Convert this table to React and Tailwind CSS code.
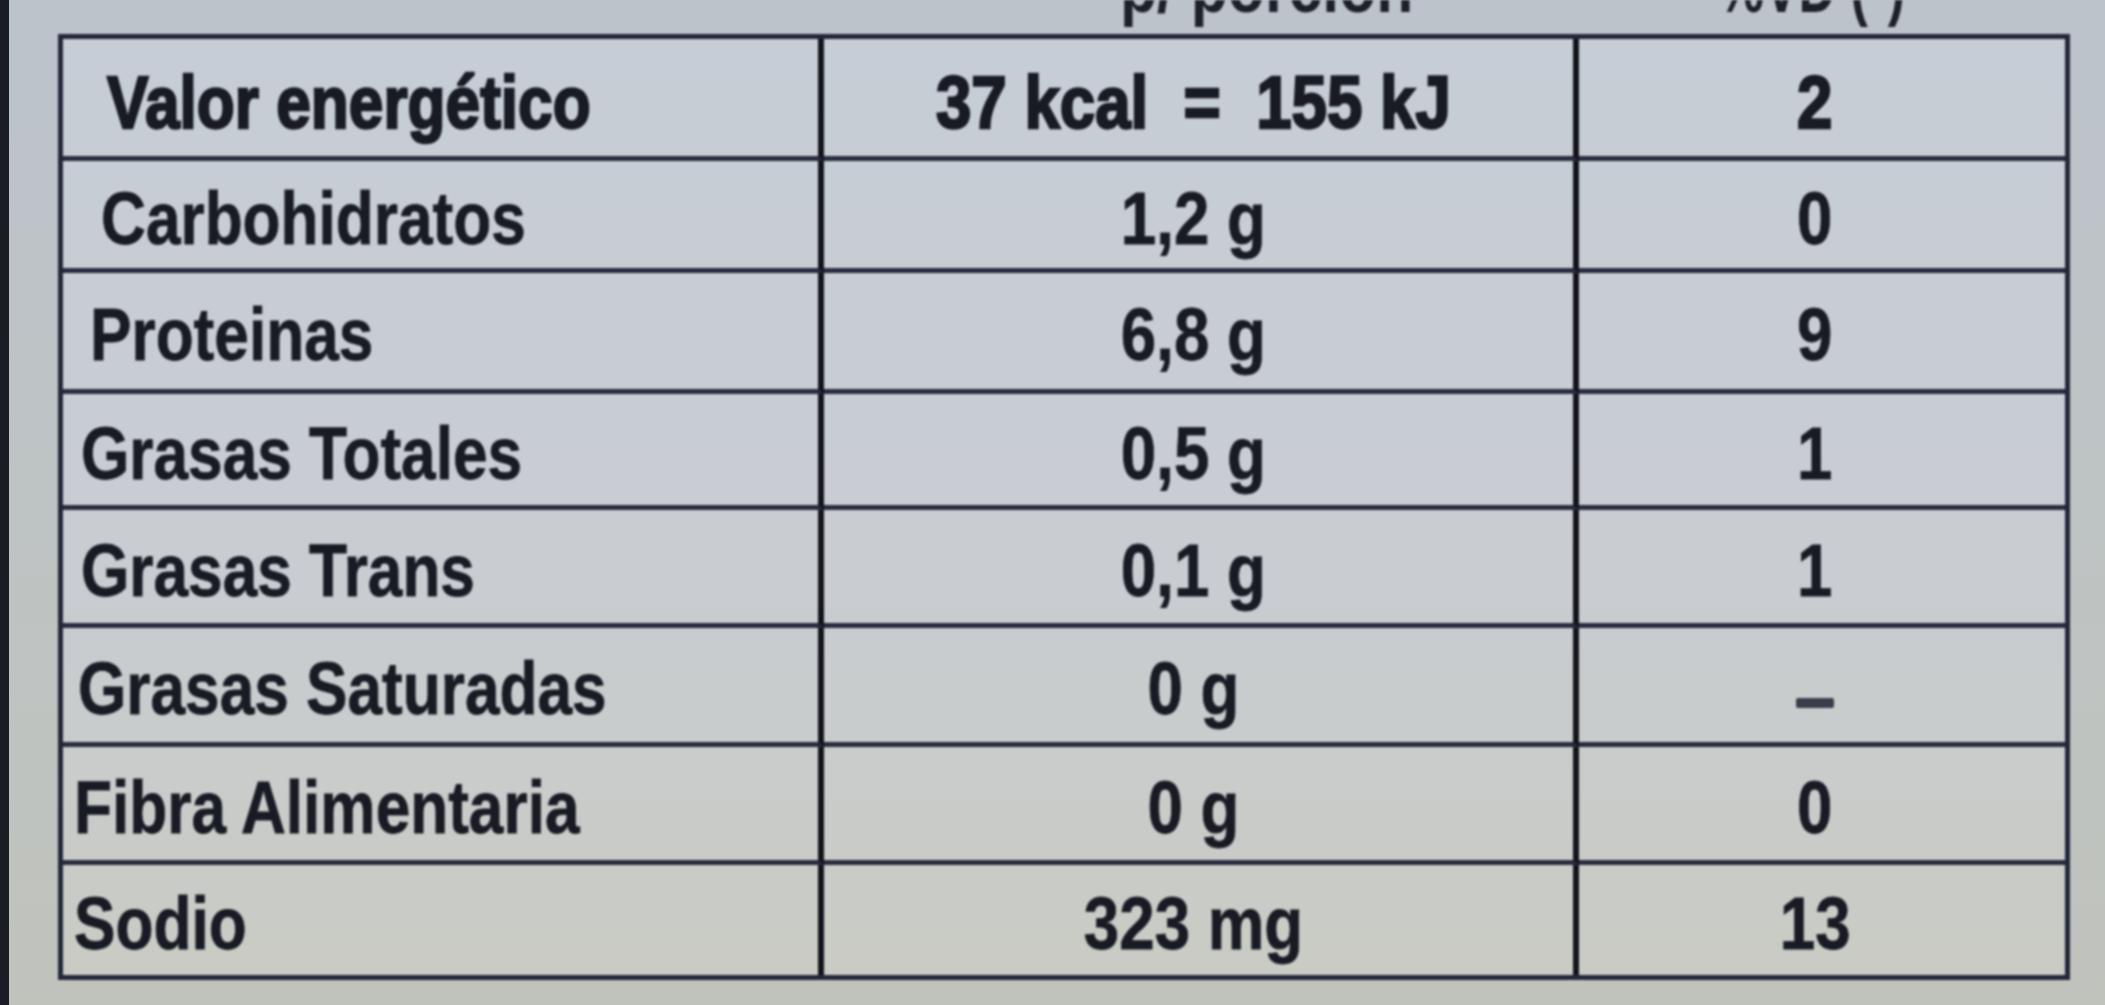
import React from "react";

const rows = [
  { label: "Valor energético", value: "37 kcal  =  155 kJ", pct: "2", heavy: true, pl: "pl-[44px]" },
  { label: "Carbohidratos", value: "1,2 g", pct: "0", pl: "pl-[38px]" },
  { label: "Proteinas", value: "6,8 g", pct: "9", pl: "pl-[27px]" },
  { label: "Grasas Totales", value: "0,5 g", pct: "1", pl: "pl-[18px]" },
  { label: "Grasas Trans", value: "0,1 g", pct: "1", pl: "pl-[18px]" },
  { label: "Grasas Saturadas", value: "0 g", pct: "-", pl: "pl-[15px]" },
  { label: "Fibra Alimentaria", value: "0 g", pct: "0", pl: "pl-[11px]" },
  { label: "Sodio", value: "323 mg", pct: "13", pl: "pl-[11px]" },
];

const font = { fontFamily: '"Liberation Sans", Arial, sans-serif' };

export default function App() {
  return (
    <div
      className="w-[2105px] h-[1005px] overflow-hidden flex bg-gradient-to-b from-[#bcc3cb] to-[#c0c3bc]"
      style={font}
    >
      <div className="w-[9px] shrink-0 bg-[#1b1d24]" />
      <div className="flex-1 flex flex-col pl-[49px]">
        {/* clipped header text from the line above */}
        <div className="h-[34px] overflow-hidden flex text-[74px] font-bold leading-none text-[#1e2029] blur-[1px] whitespace-pre">
          <span className="-mt-[50px] ml-[1062px] inline-block origin-left scale-x-[0.82]">p/ porción</span>
          <span className="-mt-[50px] ml-[240px] inline-block origin-left scale-x-[0.7]">%VD (*)</span>
        </div>
        <div className="w-[2012px] h-[946px] border-[5px] border-[#23273a] grid grid-cols-[761px_755px_1fr] grid-rows-[122px_112px_121px_116px_118px_119px_118px_1fr] bg-gradient-to-b from-[#c7cdd6] via-[#c9cdd3] to-[#c9cbc4] blur-[0.9px] text-[#191b24]">
          {rows.map((r, i) => {
            const last = i === rows.length - 1;
            const bb = last ? "" : "border-b-[5px] border-b-[#282c3e]";
            const stroke = r.heavy ? "[-webkit-text-stroke:2.5px_#191b24]" : "[-webkit-text-stroke:0.8px_#191b24]";
            const pt = r.heavy ? "pt-[10px]" : "pt-[8px]";
            return (
              <React.Fragment key={r.label}>
                <div className={`flex items-center ${pt} ${r.pl} border-r-[6px] border-r-[#13141b] ${bb}`}>
                  <span className={`inline-block origin-left scale-x-[0.84] text-[74px] font-bold leading-none whitespace-pre ${stroke}`}>
                    {r.label}
                  </span>
                </div>
                <div className={`flex items-center justify-center ${pt} pr-[10px] border-r-[6px] border-r-[#13141b] ${bb}`}>
                  <span className={`inline-block origin-center scale-x-[0.86] text-[74px] font-bold leading-none whitespace-pre ${stroke}`}>
                    {r.value}
                  </span>
                </div>
                <div className={`flex items-center justify-center ${pt} pr-[14px] ${bb}`}>
                  {r.pct === "-" ? (
                    <div className="w-[38px] h-[10px] mt-[28px] bg-[#3a3d4a] rounded-[2px]" />
                  ) : (
                    <span className={`inline-block origin-center scale-x-[0.86] text-[74px] font-bold leading-none whitespace-pre ${stroke}`}>
                      {r.pct}
                    </span>
                  )}
                </div>
              </React.Fragment>
            );
          })}
        </div>
      </div>
    </div>
  );
}
